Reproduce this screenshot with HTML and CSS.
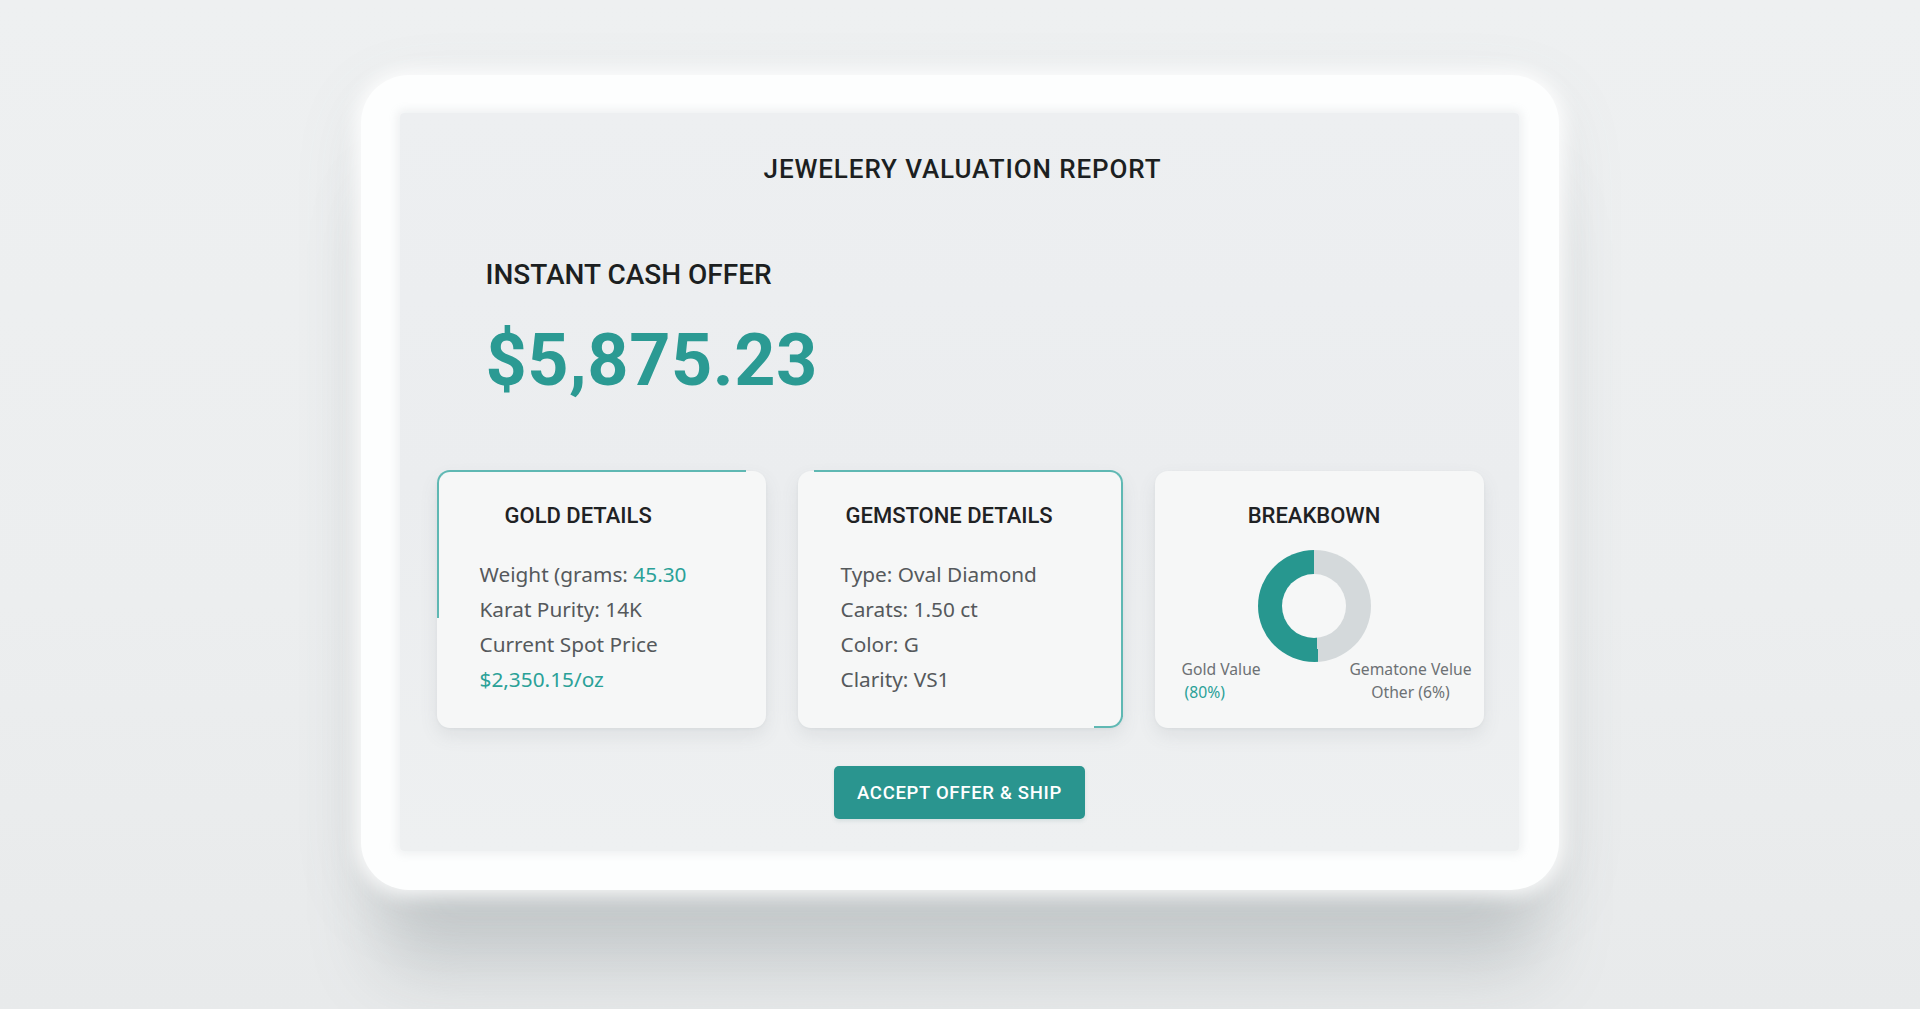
FILE: index.html
```html
<!DOCTYPE html>
<html lang="en">
<head>
<meta charset="utf-8">
<title>Jewelery Valuation Report</title>
<link rel="stylesheet" href="styles.css">
</head>
<body>
<div class="stage">
  <div class="frame">
    <div class="panel">
      <h1 class="title">JEWELERY VALUATION REPORT</h1>
      <div class="offer">
        <div class="offer-label">INSTANT CASH OFFER</div>
        <div class="offer-amount">$5,875.23</div>
      </div>
      <div class="cards">
        <div class="card card-gold">
          <h2 class="card-title title-gold">GOLD DETAILS</h2>
          <ul class="card-list">
            <li>Weight (grams: <span class="accent">45.30</span></li>
            <li>Karat Purity: 14K</li>
            <li>Current Spot Price</li>
            <li class="accent">$2,350.15/oz</li>
          </ul>
        </div>
        <div class="card card-gem">
          <h2 class="card-title title-gem">GEMSTONE DETAILS</h2>
          <ul class="card-list">
            <li>Type: Oval Diamond</li>
            <li>Carats: 1.50 ct</li>
            <li>Color: G</li>
            <li>Clarity: VS1</li>
          </ul>
        </div>
        <div class="card card-breakdown">
          <h2 class="card-title title-center">BREAKBOWN</h2>
          <div class="donut"><div class="donut-hole"></div></div>
          <div class="legend">
            <div class="legend-item legend-gold">
              <span>Gold Value</span>
              <span class="legend-pct accent">(80%)</span>
            </div>
            <div class="legend-item legend-gem">
              <span>Gematone Velue</span>
              <span>Other (6%)</span>
            </div>
          </div>
        </div>
      </div>
      <div class="actions">
        <button class="btn">ACCEPT OFFER &amp; SHIP</button>
      </div>
    </div>
  </div>
</div>
</body>
</html>
```

FILE: styles.css
```css
* { box-sizing: border-box; }

html, body {
  margin: 0;
  padding: 0;
  height: 100%;
}

body {
  background: linear-gradient(180deg, #eef0f1 0%, #eceeef 60%, #e8eaeb 100%);
  font-family: Roboto, "Liberation Sans", Arial, sans-serif;
  color: #1f2224;
  overflow: hidden;
}

.stage {
  padding-top: 75px;
  display: flex;
  justify-content: center;
}

.frame {
  position: relative;
  width: 1198px;
  height: 815px;
  margin-left: -1px;
  padding: 38px 40px 39px 39px;
  background: #fdfefe;
  border-radius: 48px;
  box-shadow:
    0 0 18px 6px rgba(255, 255, 255, 0.85),
    0 100px 70px -20px rgba(120, 128, 132, 0.28),
    0 20px 70px rgba(120, 128, 132, 0.12);
}

.panel {
  height: 738px;
  background: linear-gradient(180deg, #edeff1 0%, #ebedef 50%, #eef0f1 100%);
  border-radius: 4px;
  box-shadow: 0 0 8px 3px rgba(236, 238, 240, 0.9);
  padding-top: 41px;
  display: flex;
  flex-direction: column;
}

.title {
  margin: 0;
  font-size: 26px;
  line-height: 30px;
  font-weight: 500;
  letter-spacing: 0.9px;
  text-align: center;
  color: #1c1f21;
  padding-left: 7px;
}

.offer {
  margin-top: 74px;
  padding-left: 86px;
}

.offer-label {
  font-size: 28px;
  line-height: 34px;
  font-weight: 500;
  color: #1c1f21;
}

.offer-amount {
  margin-top: 29px;
  font-size: 72px;
  line-height: 80px;
  font-weight: 700;
  color: #2b9a93;
  letter-spacing: 0.5px;
}

.cards {
  margin-top: 70px;
  padding: 0 36px 0 37px;
  display: grid;
  grid-template-columns: 329px 325px 329px;
  column-gap: 32px;
  height: 257px;
}

.card {
  position: relative;
  background: #f6f7f7;
  border-radius: 13px;
  box-shadow: 0 8px 18px rgba(90, 100, 105, 0.10), 0 1px 3px rgba(90, 100, 105, 0.06);
  padding: 32px 16px 0 43px;
}

.card-gold::before {
  content: "";
  position: absolute;
  top: -1px;
  left: 0;
  width: 307px;
  height: 146px;
  border-top: 2px solid #5fb8b3;
  border-left: 2px solid #5fb8b3;
  border-top-left-radius: 13px;
}

.card-gem::before {
  content: "";
  position: absolute;
  top: -1px;
  right: 0;
  width: 307px;
  height: calc(100% - 12px);
  border-top: 2px solid #5fb8b3;
  border-right: 2px solid #5fb8b3;
  border-top-right-radius: 13px;
}

.card-gem::after {
  content: "";
  position: absolute;
  bottom: 0;
  right: 0;
  width: 27px;
  height: 14px;
  border-right: 2px solid #5fb8b3;
  border-bottom: 2px solid #5fb8b3;
  border-bottom-right-radius: 13px;
}

.card-title {
  margin: 0;
  font-size: 22px;
  line-height: 26px;
  font-weight: 500;
  color: #1f2224;
}

.title-gold { padding-left: 25px; }
.title-gem { padding-left: 5px; }

.card-list {
  list-style: none;
  margin: 28px 0 0;
  padding: 0;
  font-family: "Noto Sans", Roboto, sans-serif;
  font-size: 20.8px;
  line-height: 35px;
  color: #55595c;
}

.accent { color: #2aa198; }

.card-breakdown {
  padding: 32px 10px 0 0;
  display: flex;
  flex-direction: column;
  align-items: center;
}

.title-center { text-align: center; padding-left: 0; }

.donut {
  margin-top: 21px;
  width: 113px;
  height: 112px;
  border-radius: 50%;
  background: conic-gradient(#d4d9db 0deg 176deg, #27978f 176deg 360deg);
  display: flex;
  align-items: center;
  justify-content: center;
  flex-shrink: 0;
}

.donut-hole {
  width: 64px;
  height: 64px;
  border-radius: 50%;
  background: #f6f7f7;
}

.legend {
  align-self: stretch;
  display: flex;
  justify-content: space-between;
  margin-top: -4px;
  margin-right: -10px;
  padding: 0 12px 0 27px;
  font-family: "Noto Sans", Roboto, sans-serif;
  font-size: 15.7px;
  line-height: 23px;
  color: #6d7174;
}

.legend-item {
  display: flex;
  flex-direction: column;
}

.legend-gold .legend-pct { padding-left: 3px; }

.legend-gem { align-items: center; }

.actions {
  margin-top: 38px;
  display: flex;
  justify-content: center;
}

.btn {
  width: 251px;
  height: 53px;
  border: none;
  border-radius: 5px;
  background: #2a958f;
  color: #ffffff;
  font-family: Roboto, "Liberation Sans", Arial, sans-serif;
  font-size: 18.5px;
  font-weight: 500;
  letter-spacing: 0.7px;
  box-shadow: 0 2px 4px rgba(40, 100, 100, 0.12);
  margin-left: 1px;
}
```
